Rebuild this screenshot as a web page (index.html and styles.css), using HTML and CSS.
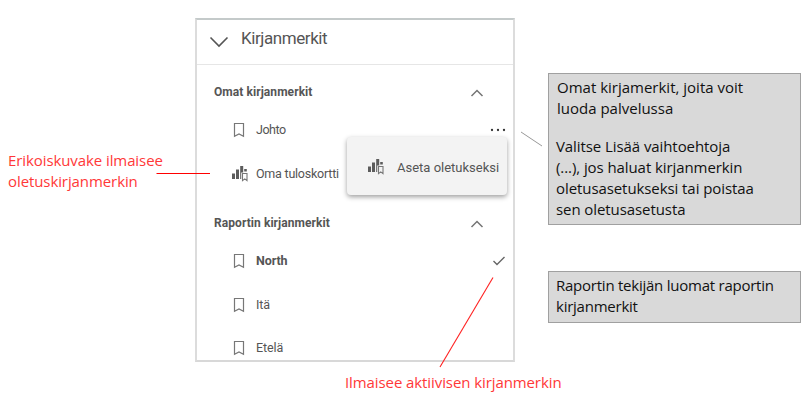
FILE: index.html
```html
<!DOCTYPE html>
<html lang="fi">
<head>
<meta charset="utf-8">
<title>Kirjanmerkit</title>
<link rel="stylesheet" href="styles.css">
</head>
<body>
<svg class="defs" width="0" height="0" aria-hidden="true">
  <symbol id="bookmark" viewBox="0 0 12 16"><path d="M1.500 1.500h9v12.800L6 11.900l-4.500 2.400z" fill="none" stroke="#777" stroke-width="1.200"/></symbol>
  <symbol id="up" viewBox="0 0 14 8"><path d="M1.500 7 7 1.500 12.500 7" fill="none" stroke="#757575" stroke-width="1.500"/></symbol>
  <symbol id="score" viewBox="0 0 18 18"><path d="M1 9.500h3V15H1zM5 5.500h3V15H5zM9.200 2h3v6.500h-2V15h-1zM13.200 5h2.600v2.500h-2.600z" fill="#5c5c5c"/><path d="M11.500 9.500h4.500v7.200l-2.250-1.800-2.250 1.800z" fill="none" stroke="#777" stroke-width="1.100"/></symbol>
</svg>
<main class="board">
  <aside class="left"><p class="note">Erikoiskuvake ilmaisee<br>oletuskirjanmerkin</p></aside>
  <div class="middle">
    <section class="panel">
      <header class="head">
        <svg class="down" viewBox="0 0 20 12"><path d="M1.500 1.500 10 10 18.500 1.500" fill="none" stroke="#555" stroke-width="1.600"/></svg>
        <h1>Kirjanmerkit</h1>
      </header>
      <div class="section"><h2>Omat kirjanmerkit</h2><svg class="up"><use href="#up"/></svg></div>
      <div class="row r1"><svg class="bm"><use href="#bookmark"/></svg><span class="johto">Johto</span>
        <svg class="dots" viewBox="0 0 16 4"><g fill="#333"><circle cx="2" cy="2" r="1.150"/><circle cx="8" cy="2" r="1.150"/><circle cx="14" cy="2" r="1.150"/></g></svg>
        <div class="menu"><svg class="score"><use href="#score"/></svg><span>Aseta oletukseksi</span></div>
      </div>
      <div class="row r2"><svg class="score"><use href="#score"/></svg><span class="oma">Oma tuloskortti</span></div>
      <div class="section s2"><h2 class="rep">Raportin kirjanmerkit</h2><svg class="up"><use href="#up"/></svg></div>
      <div class="row r3"><svg class="bm"><use href="#bookmark"/></svg><b>North</b>
        <svg class="check" viewBox="0 0 14 10"><path d="M1.500 5 5 8.500 12.500 1" fill="none" stroke="#666" stroke-width="1.400"/></svg></div>
      <div class="row r4"><svg class="bm"><use href="#bookmark"/></svg><span>Itä</span></div>
      <div class="row r5"><svg class="bm"><use href="#bookmark"/></svg><span>Etelä</span></div>
    </section>
    <p class="note active">Ilmaisee aktiivisen kirjanmerkin</p>
  </div>
  <div class="right">
    <div class="box b1">
      <p class="first">Omat kirjamerkit, joita voit<br>luoda palvelussa</p>
      <p>Valitse Lisää vaihtoehtoja<br>(...), jos haluat kirjanmerkin<br>oletusasetukseksi tai poistaa<br>sen oletusasetusta</p>
    </div>
    <div class="box b2"><p>Raportin tekijän luomat raportin<br>kirjanmerkit</p></div>
  </div>
  <svg class="lines" viewBox="0 0 811 410"><path d="M156.500 173.500H210" stroke="#f00"/><path d="M493 277.500 440 367" stroke="#ff2020" stroke-width="1.100"/><path d="M521 132 542 146" stroke="#999"/></svg>
</main>
</body>
</html>
```
FILE: styles.css
```css
* { box-sizing: border-box; margin: 0; padding: 0; }
body { width: 811px; height: 410px; overflow: hidden; background: #fff; font-family: "Open Sans", sans-serif; }
svg { display: block; flex: none; }
.defs { position: absolute; }
.board { position: relative; display: grid; grid-template-columns: 195px 353px 253px; height: 410px; }
.left { padding: 150px 0 0 8px; }
.note { font-size: 15px; line-height: 21px; color: #ff3838; white-space: nowrap; letter-spacing: -0.09px; }
.middle { padding-top: 18px; }
.panel { width: 320px; height: 344px; border: 2px solid #dcdcdc; border-top: 2px solid #c4caca; border-bottom-color: #d8d8d8; font-family: Roboto, sans-serif; color: #555; white-space: nowrap; }
.head { display: flex; align-items: center; height: 45px; padding: 0 0 8px 12px; border-bottom: 1px solid #e6e6e6; }
.down { width: 20px; height: 12px; margin-top: 8px; }
h1 { margin-left: 12px; font-size: 17px; font-weight: 400; letter-spacing: -0.42px; }
.section { display: flex; justify-content: space-between; align-items: center; height: 20px; margin-top: 17px; padding: 0 29px 0 17px; }
.s2 { margin-top: 30px; }
.up { width: 14px; height: 8px; margin-top: 2px; }
h2 { font-size: 12px; font-weight: 700; line-height: 20px; letter-spacing: 0.07px; }
.row { position: relative; display: flex; align-items: center; height: 20px; padding-left: 35px; font-size: 12.5px; line-height: 21px; letter-spacing: -0.1px; }
.bm { width: 12px; height: 16px; margin: 1px 11px 0 1px; }
.score { width: 18px; height: 18px; }
.r1 { margin-top: 17px; }
.johto { letter-spacing: -0.5px; }
.oma { letter-spacing: -0.23px; }
.r2 { margin-top: 24px; }
.r2 .score { margin: 0 7px 0 -1px; }
.r3 { margin-top: 17px; }
.r4 { margin-top: 24px; }
.r5 { margin-top: 23px; }
.dots { width: 16px; height: 4px; margin-left: auto; margin-right: 7px; margin-top: 1px; }
.check { width: 14px; height: 10px; margin-left: auto; margin-right: 7px; margin-top: 2px; }
.menu { position: absolute; z-index: 2; left: 150px; top: 18px; width: 160px; height: 58px; display: flex; align-items: center; padding-left: 20px; border-radius: 4px; background: #f3f3f3; box-shadow: 0 2px 5px rgba(0,0,0,.38); font-size: 13px; letter-spacing: 0; }
.menu span { margin: 2px 0 0 12px; }
.active { margin: 10px 0 0 150px; }
.right { padding-top: 73px; }
.box { width: 253px; border: 1px solid #a0a0a0; background: #d9d9d9; color: #111; font-size: 15px; line-height: 21.3px; letter-spacing: -0.08px; white-space: nowrap; padding-left: 7px; }
.b1 { height: 152px; padding-top: 3px; }
.first { margin: 0 0 16px 1px; letter-spacing: 0; }
.b2 { height: 52px; margin-top: 46px; padding-top: 3px; letter-spacing: -0.24px; }
.lines { position: absolute; left: 0; top: 0; width: 811px; height: 410px; fill: none; pointer-events: none; }
```
